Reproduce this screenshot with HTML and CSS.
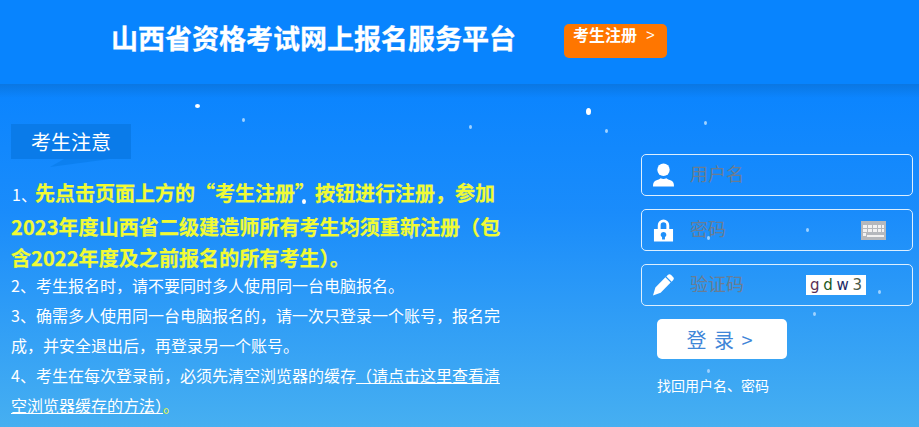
FILE: index.html
```html
<!DOCTYPE html>
<html lang="zh-CN">
<head>
<meta charset="utf-8">
<title>山西省资格考试网上报名服务平台</title>
<link rel="stylesheet" href="styles.css">
</head>
<body>
<header class="top">
  <h1 class="title">山西省资格考试网上报名服务平台</h1>
  <a class="reg" href="#"><b>考生注册</b><span class="reg-arrow">&gt;</span></a>
</header>
<main class="main">
  <section class="notes">
    <h2 class="notes-head">考生注意</h2>
    <div class="lead">
      <p class="lead-first">1、<strong class="lead-hi">先点击页面上方的“考生注册”按钮进行注册，参加</strong></p>
      <p class="lead-rest"><strong>2023年度山西省二级建造师所有考生均须重新注册（包含2022年度及之前报名的所有考生）。</strong></p>
    </div>
    <p class="item">2、考生报名时，请不要同时多人使用同一台电脑报名。</p>
    <p class="item">3、确需多人使用同一台电脑报名的，请一次只登录一个账号，报名完成，并安全退出后，再登录另一个账号。</p>
    <p class="item">4、考生在每次登录前，必须先清空浏览器的缓存<a href="#">（请点击这里查看清空浏览器缓存的方法）</a><span class="dot-y">。</span></p>
  </section>
  <form class="login">
    <label class="field">
      <svg class="ico" viewBox="0 0 22 24"><circle cx="11" cy="6.500" r="6.500" fill="#fff"/><path d="M0 24c0-3 .5-5 2.500-6 2.500-1 5-1.800 5.500-2.600 2 1 4 1 6 0 .5.800 3 1.600 5.500 2.600 2 1 2.500 3 2.500 6z" fill="#fff"/></svg>
      <input class="inp" placeholder="用户名">
    </label>
    <label class="field">
      <svg class="ico" viewBox="0 0 22 24"><path d="M5 11V7a6 6 0 0 1 12 0v4h-3V7a3 3 0 0 0-6 0v4z" fill="#fff"/><path fill-rule="evenodd" d="M1 11h20v13H1zM11 14a3 3 0 0 0-1.500 5.600V22h3v-2.400A3 3 0 0 0 11 14z" fill="#fff"/></svg>
      <input class="inp" placeholder="密码">
      <svg class="kbd" viewBox="0 0 25 19"><rect width="25" height="19" fill="#b4b8bd"/><g fill="#f2f2f2"><rect x="2" y="4" width="21" height="3"/><rect x="2" y="8" width="21" height="3"/><rect x="2" y="12" width="3" height="3"/><rect x="6" y="14" width="17" height="2"/></g><g fill="#b4b8bd"><rect x="6" y="4" width="1" height="7"/><rect x="11" y="4" width="1" height="7"/><rect x="16" y="4" width="1" height="7"/><rect x="20" y="4" width="1" height="7"/></g></svg>
    </label>
    <label class="field">
      <svg class="ico" viewBox="0 0 22 24"><path d="M15.500 1.500a2.500 2.500 0 0 1 3.500 0l2 2a2.500 2.500 0 0 1 0 3.500L19.500 8.500l-5.500-5.500zM13 4l5.500 5.500L8 20 0 23l2.500-8.500z" fill="#fff"/></svg>
      <input class="inp" placeholder="验证码">
      <span class="captcha"><span class="c1">g</span><span class="c2">d</span><span class="c3">w</span><span class="c4">3</span></span>
    </label>
    <button class="submit" type="button">登 录 &gt;</button>
    <a class="forgot" href="#">找回用户名、密码</a>
  </form>
</main>
<div class="snow" aria-hidden="true">
  <i class="f s1"></i><i class="f s2"></i><i class="f s3"></i><i class="f s4"></i><i class="f s5"></i><i class="f s6"></i><i class="f s7"></i><i class="f s8"></i><i class="f s9"></i><i class="f s10"></i><i class="f s11"></i><i class="f s12"></i><i class="f s13"></i>
</div>
</body>
</html>
```
FILE: styles.css
```css
* { box-sizing: border-box; }
html, body { margin: 0; height: 427px; overflow: hidden; }
body {
  position: relative;
  font-family: "Noto Sans CJK SC", "Liberation Sans", sans-serif;
  color: #fff;
  background: linear-gradient(180deg, #0a84ff 0, #0a84ff 84px, #1a8cfb 213px, #46aff1 427px);
}
a { color: inherit; }

.top {
  height: 84px;
  background: #0884fe;
  display: flex;
  align-items: flex-start;
  padding-left: 111px;
  position: relative;
}
.top::after {
  content: "";
  position: absolute;
  left: 0; right: 0; top: 84px;
  height: 14px;
  background: linear-gradient(180deg, #0b77e2, rgba(10,132,255,0));
}
.title {
  margin: 19px 0 0;
  font-size: 27px;
  line-height: 38px;
  font-weight: 700;
  -webkit-text-stroke: .3px #fff;
}
.reg {
  margin: 24px 0 0 48px;
  width: 103px;
  height: 34px;
  border-radius: 5px;
  background: #ff7600;
  color: #fff;
  text-decoration: none;
  font-size: 16px;
  line-height: 21px;
  padding-left: 9px;
  display: flex;
}
.reg-arrow { margin-left: 9px; font-size: 15px; line-height: 22px; font-family: "Liberation Sans", sans-serif; font-weight: 400; }

.main { display: flex; padding-left: 11px; }
.notes { width: 490px; margin-top: 40px; }
.notes-head {
  position: relative;
  margin: 0;
  width: 120px;
  height: 35px;
  background: #0a7be9;
  font-size: 20px;
  font-weight: 400;
  line-height: 35px;
  text-align: center;
}
.notes-head::after {
  content: "";
  position: absolute;
  left: 39px; top: 35px;
  width: 60px;
  height: 8px;
  background: #0c80f0;
  clip-path: polygon(14px 0, 60px 0, 0 8px);
}
.lead { margin: 19px 0 -4px; }
.lead-first, .lead-rest { font-size: 16px; }
.lead-first { margin: 0 0 3px; padding-left: 1px; line-height: 30px; }
.lead-rest { margin: 0; line-height: 30px; letter-spacing: .08px; }
.lead-first strong, .lead-rest strong { font-size: 20px; font-weight: 700; color: #f1fb33; -webkit-text-stroke: .25px #f1fb33; }
.lead-hi { margin-left: -2px; }
.item {
  margin: 0;
  font-size: 16px;
  line-height: 30px;
}
.item a { text-decoration: underline; }
.dot-y { color: #f3fb2f; }

.login {
  margin: 70px 0 0 140px;
  width: 272px;
  display: flex;
  flex-direction: column;
  align-items: flex-start;
}
.field {
  width: 272px;
  height: 42px;
  border: 1px solid #dcefff;
  border-radius: 5px;
  display: flex;
  align-items: center;
  padding-left: 11px;
  margin-bottom: 13px;
}
.ico { width: 21px; height: 24px; flex: none; }
.inp {
  flex: 1;
  min-width: 0;
  height: 30px;
  margin-left: 16px;
  padding: 0 0 4px;
  border: 0;
  outline: 0;
  background: transparent;
  font: 18px "Noto Sans CJK SC", sans-serif;
  color: #333;
}
.inp::placeholder { color: #6a7d92; opacity: 1; }
.kbd { width: 25px; height: 19px; flex: none; margin-right: 26px; }
.captcha {
  flex: none;
  width: 60px;
  height: 20px;
  margin: 0 46px 0 0;
  background: #fff;
  font: 15px/20px "DejaVu Sans", sans-serif;
  display: flex;
  justify-content: space-around;
  padding: 0 2px;
}
.c1 { color: #5a2f55; }
.c2 { color: #1d5a1d; }
.c3 { color: #1c2a66; }
.c4 { color: #4a5a4a; }
.submit {
  margin: 0 0 0 16px;
  width: 130px;
  height: 40px;
  border: 0;
  border-radius: 5px;
  background: #fff;
  color: #3f86d8;
  font: 20px "Noto Sans CJK SC", sans-serif;
  letter-spacing: 1px;
  word-spacing: 1px;
  padding: 0 4px 0 0;
}
.forgot {
  margin: 15px 0 0 16px;
  font-size: 14px;
  line-height: 22px;
  text-decoration: none;
}

.snow { position: absolute; inset: 0; pointer-events: none; }
.f { position: absolute; border-radius: 50%; background: #9fd2ff; width: 3px; height: 4px; }
.s1 { left: 195px; top: 104px; width: 5px; height: 4px; background: #fff; }
.s2 { left: 242px; top: 118px; }
.s3 { left: 469px; top: 125px; }
.s4 { left: 586px; top: 108px; width: 5px; height: 7px; background: #fff; }
.s5 { left: 605px; top: 129px; }
.s6 { left: 704px; top: 121px; }
.s7 { left: 302px; top: 199px; width: 4px; height: 5px; background: #fff; }
.s8 { left: 410px; top: 235px; }
.s9 { left: 806px; top: 228px; }
.s10 { left: 707px; top: 236px; }
.s11 { left: 878px; top: 290px; }
.s12 { left: 813px; top: 312px; }
.s13 { left: 707px; top: 369px; }
```
